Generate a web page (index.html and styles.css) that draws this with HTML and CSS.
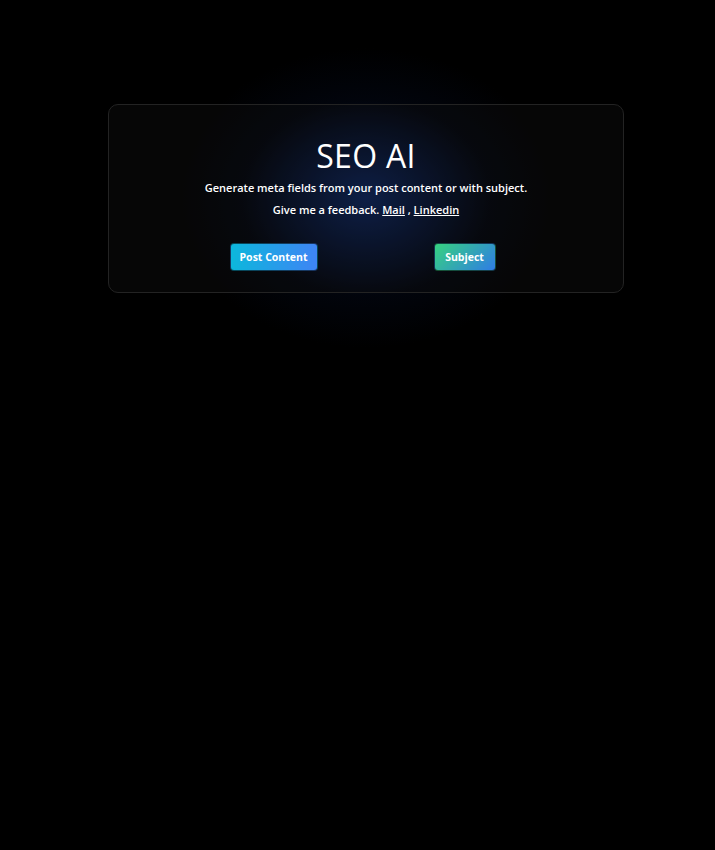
FILE: index.html
```html
<!DOCTYPE html>
<html lang="en">
<head>
<meta charset="utf-8">
<title>SEO AI</title>
<link rel="stylesheet" href="styles.css">
</head>
<body>
<main class="page">
  <section class="card">
    <h1 class="title">SEO AI</h1>
    <p class="lead">Generate meta fields from your post content or with subject.</p>
    <p class="feedback">Give me a feedback. <a href="#" class="link">Mail</a> , <a href="#" class="link">Linkedin</a></p>
    <div class="actions">
      <button class="btn btn-post">Post Content</button>
      <button class="btn btn-subject">Subject</button>
    </div>
  </section>
</main>
</body>
</html>
```
FILE: styles.css
```css
html, body {
  margin: 0;
  padding: 0;
  height: 100%;
}
body {
  background: #000;
  font-family: "Open Sans", "DejaVu Sans", sans-serif;
  color: #fff;
}
.page {
  min-height: 850px;
  background: radial-gradient(ellipse 190px 150px at 366px 198px, rgba(12, 36, 92, 1) 0%, rgba(8, 25, 66, 0.75) 35%, rgba(4, 12, 34, 0.35) 65%, rgba(0, 0, 0, 0) 100%), #000;
  padding-top: 104px;
  box-sizing: border-box;
}
.card {
  width: 516px;
  height: 189px;
  box-sizing: border-box;
  margin-left: 108px;
  border: 1px solid #232323;
  border-radius: 10px;
  background: rgba(20, 20, 20, 0.3);
  text-align: center;
  padding-top: 30px;
}
.title {
  margin: 0;
  font-size: 32px;
  font-weight: 400;
  line-height: 42px;
  letter-spacing: 0.3px;
}
.lead {
  margin: 3px 0 0;
  font-size: 11px;
  font-weight: 600;
  line-height: 16px;
}
.feedback {
  margin: 6px 0 0;
  font-size: 11px;
  font-weight: 600;
  line-height: 16px;
}
.link {
  color: #fff;
  text-decoration: underline;
}
.actions {
  display: flex;
  justify-content: center;
  gap: 116px;
  margin-top: 25px;
  padding-right: 7px;
}
.btn {
  border: 1px solid rgba(0, 0, 0, 0.6);
  border-radius: 4px;
  height: 28px;
  color: #fff;
  font-family: inherit;
  font-size: 10.5px;
  font-weight: 700;
  padding: 0;
  cursor: pointer;
  box-sizing: border-box;
}
.btn-post {
  width: 88px;
  background: linear-gradient(90deg, #0cb7dc, #3f84f5);
}
.btn-subject {
  width: 62px;
  background: linear-gradient(135deg, #36d27f, #2f7ce6);
}
```
